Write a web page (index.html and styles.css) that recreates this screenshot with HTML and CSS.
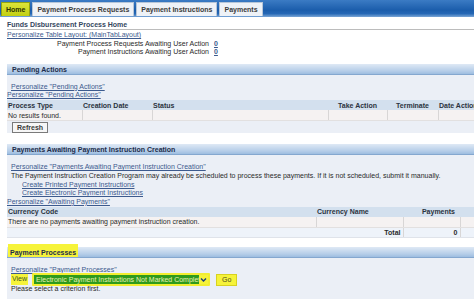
FILE: index.html
```html
<!doctype html>
<html lang="en">
  <head>
    <meta charset="UTF-8" />
    <meta name="viewport" content="width=device-width, initial-scale=1.0" />
    <title>Funds Disbursement Process Home</title>
    <link rel="stylesheet" href="styles.css">
  </head>
  <body>
    <nav class="tabbar">
      <a class="tab current" href="#">Home</a>
      <a class="tab" href="#">Payment Process Requests</a>
      <a class="tab" href="#">Payment Instructions</a>
      <a class="tab" href="#">Payments</a>
    </nav>

    <div class="page">
      <h1 class="page-title">Funds Disbursement Process Home</h1>
      <a class="link" href="#">Personalize Table Layout: (MainTabLayout)</a>

      <div class="summary">
        <span class="summary-label">Payment Process Requests Awaiting User Action</span>
        <a class="link" href="#">0</a>
        <span class="summary-label">Payment Instructions Awaiting User Action</span>
        <a class="link" href="#">0</a>
      </div>

      <section class="region pending">
        <h2 class="region-head">Pending Actions</h2>
        <div class="region-body">
          <a class="link indent" href="#">Personalize "Pending Actions"</a>
          <a class="link" href="#">Personalize "Pending Actions"</a>
          <table class="grid">
            <colgroup>
              <col style="width: 75px" />
              <col style="width: 70px" />
              <col style="width: 176px" />
              <col style="width: 59px" />
              <col style="width: 51px" />
              <col style="width: 60px" />
            </colgroup>
            <thead>
              <tr>
                <th>Process Type</th>
                <th>Creation Date</th>
                <th>Status</th>
                <th class="center">Take Action</th>
                <th class="center">Terminate</th>
                <th>Date Action</th>
              </tr>
            </thead>
            <tbody>
              <tr class="row-empty">
                <td>No results found.</td>
                <td></td>
                <td></td>
                <td></td>
                <td></td>
                <td></td>
              </tr>
            </tbody>
          </table>
          <button class="btn" type="button">Refresh</button>
        </div>
      </section>

      <section class="region awaiting">
        <h2 class="region-head">Payments Awaiting Payment Instruction Creation</h2>
        <div class="region-body">
          <a class="link indent" href="#">Personalize "Payments Awaiting Payment Instruction Creation"</a>
          <p class="note">The Payment Instruction Creation Program may already be scheduled to process these payments. If it is not scheduled, submit it manually.</p>
          <a class="link deep" href="#">Create Printed Payment Instructions</a>
          <a class="link deep" href="#">Create Electronic Payment Instructions</a>
          <a class="link" href="#">Personalize "Awaiting Payments"</a>
          <table class="grid">
            <colgroup>
              <col style="width: 309px" />
              <col style="width: 87px" />
              <col style="width: 57px" />
              <col style="width: 20px" />
            </colgroup>
            <thead>
              <tr>
                <th>Currency Code</th>
                <th>Currency Name</th>
                <th class="payments">Payments</th>
                <th></th>
              </tr>
            </thead>
            <tbody>
              <tr class="row-empty">
                <td>There are no payments awaiting payment instruction creation.</td>
                <td></td>
                <td></td>
                <td></td>
              </tr>
              <tr class="row-total">
                <td colspan="2" class="right">Total</td>
                <td class="right">0</td>
                <td></td>
              </tr>
            </tbody>
          </table>
        </div>
      </section>

      <section class="region processes">
        <h2 class="region-head"><span class="mark">Payment Processes</span></h2>
        <div class="region-body">
          <a class="link indent" href="#">Personalize "Payment Processes"</a>
          <div class="view-row">
            <span class="view-label">View</span>
            <span class="select">
              <span class="select-text">Electronic Payment Instructions Not Marked Complete</span>
              <span class="select-arrow">
                <svg width="7" height="6" viewBox="0 0 7 6"><path d="M1 1.5 L3.5 4 L6 1.5" fill="none" stroke="#1d3d7a" stroke-width="1.4"/></svg>
              </span>
            </span>
            <button class="btn go" type="button">Go</button>
          </div>
          <p class="note">Please select a criterion first.</p>
        </div>
      </section>
    </div>
  </body>
</html>
```

FILE: styles.css
```css
html,
body {
  margin: 0;
  overflow: hidden;
}

body {
  width: 474px;
  height: 300px;
  background: #fff;
  font-family: "Liberation Sans", Arial, sans-serif;
  font-size: 7px;
  line-height: 8.7px;
  color: #2a2a2a;
}

/* tabs */

.tabbar {
  display: flex;
  align-items: flex-end;
  gap: 2px;
  height: 17px;
  padding-left: 1px;
  background: linear-gradient(to bottom, #3b7bc4 0%, #1b5dab 60%, #2467b5 80%, #7aa6d6 100%);
}

.tab {
  display: block;
  height: 13px;
  margin-bottom: 1px;
  padding: 0 4px;
  border: 1px solid #b7c6d8;
  border-bottom: 0;
  background: #eef2f7;
  color: #3b3b3b;
  font-weight: bold;
  line-height: 13px;
  text-decoration: none;
}

.tab.current {
  border-color: #93a410;
  background: linear-gradient(to bottom, #dbe43a, #c2cf10);
  color: #2c3400;
}

/* page */

.page {
  padding-left: 7px;
}

.page-title {
  margin: 0;
  padding-top: 3px;
  border-bottom: 1px solid #bcbcbc;
  font-size: 7px;
  font-weight: bold;
  line-height: 9px;
  color: #34465e;
}

.link {
  display: block;
  margin-top: 1px;
  color: #3c5a8e;
  text-decoration: underline;
}

.link.indent {
  margin-left: 4px;
}

.link.deep {
  margin-top: 0;
  margin-left: 15px;
}

.summary {
  display: grid;
  grid-template-columns: 202px auto;
  column-gap: 5px;
  justify-content: start;
  line-height: 8px;
}

.summary-label {
  text-align: right;
}

.summary .link {
  margin-top: 0;
  font-weight: bold;
}

/* regions */

.region {
  margin-top: 8px;
}

.region-head {
  margin: 0;
  height: 10px;
  padding-left: 5px;
  border-bottom: 1px solid #84a7cf;
  background: linear-gradient(to bottom, #dfe9f5, #b5cde8 70%, #9dbde0);
  font-size: 7px;
  font-weight: bold;
  line-height: 11px;
  color: #1c2c4a;
}

.region-body {
  padding-top: 8px;
  background: #ebeff6;
}

.region-body .link {
  margin-top: 0;
}

.note {
  margin: 0 0 0 4px;
  color: #2a2a2a;
}

/* tables */

.grid {
  border-collapse: collapse;
  table-layout: fixed;
  line-height: 9px;
}

.grid th {
  height: 10px;
  padding: 0 1px;
  background: #d3e0ee;
  color: #2b3340;
  font-weight: bold;
  text-align: left;
  white-space: nowrap;
  overflow: hidden;
}

.grid td {
  height: 10px;
  padding: 0 1px;
  border-left: 1px solid #d8d6d6;
  white-space: nowrap;
}

.grid td:first-child {
  border-left: 0;
}

.grid .center {
  text-align: center;
}

.grid .payments {
  text-align: right;
  padding-right: 5px;
}

.grid .right {
  text-align: right;
  font-weight: bold;
  padding-right: 2px;
}

.row-empty td {
  background: #f5f2f2;
  border-bottom: 1px solid #e2e0e0;
}

.row-total td {
  height: 9px;
  background: #eef3fa;
  border-bottom: 1px solid #dfe3ea;
}

/* buttons */

.btn {
  display: block;
  height: 11px;
  margin: 1px 0 1px 5px;
  padding: 0 4px;
  border: 1px solid #7a7a7a;
  background: #f6f6f6;
  font-family: inherit;
  font-size: 7px;
  font-weight: bold;
  line-height: 9px;
  color: #3a3a3a;
}

/* sections */

.pending .grid {
  width: 491px;
}

.awaiting {
  margin-top: 11px;
}

.awaiting .grid {
  width: 473px;
}

.processes {
  margin-top: 9px;
}

.processes .region-body {
  height: 33px;
}

.mark {
  padding: 5px 2px 1px;
  margin-left: -4px;
  background: #f6f33a;
}

.view-row {
  display: flex;
  align-items: center;
  gap: 4px;
  height: 11px;
  margin-left: 4px;
}

.view-label {
  padding: 1px;
  background: #f6f33a;
  color: #3c5a1e;
}

.select {
  display: flex;
  width: 174px;
  height: 9px;
  border: 2px solid #f2ee30;
  border-radius: 1px;
  background: #2e9a1c;
  overflow: hidden;
}

.select-text {
  flex: 1;
  padding-left: 2px;
  overflow: hidden;
  white-space: nowrap;
  color: #e9f3b0;
  line-height: 9px;
}

.select-arrow {
  display: flex;
  align-items: center;
  justify-content: center;
  width: 9px;
  background: #f6f33a;
}

.btn.go {
  height: 12px;
  margin: 0 0 0 2px;
  padding: 0 5px;
  border-color: #d8d220;
  background: #f6f33a;
  font-weight: normal;
  color: #4a4a20;
}
```
